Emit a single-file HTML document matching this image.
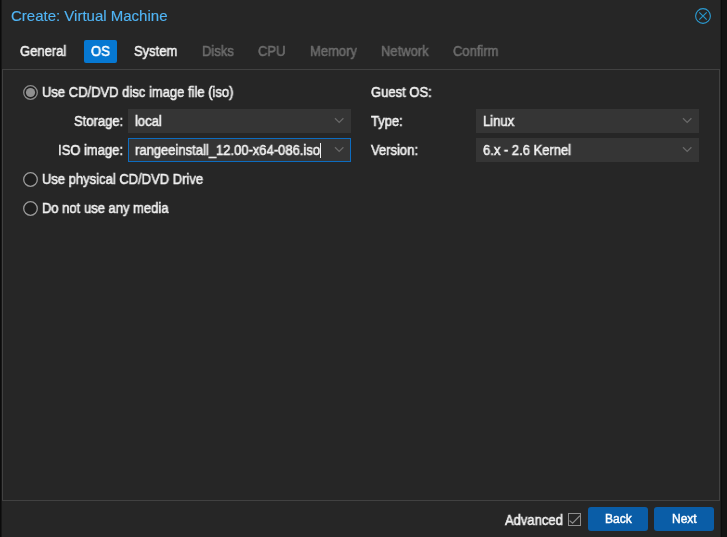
<!DOCTYPE html>
<html><head><meta charset="utf-8">
<style>
*{box-sizing:border-box;margin:0;padding:0}
html,body{width:727px;height:537px;overflow:hidden;background:#111}
body{font-family:"Liberation Sans",sans-serif;color:#f0f0f0;position:relative}
.e{position:absolute;top:0;height:537px}
.win{position:absolute;left:2px;top:0;width:718px;height:537px;background:#262626}
.t{position:absolute;white-space:nowrap;font-size:14px;line-height:16px;transform:scaleX(0.92857);transform-origin:0 0;-webkit-text-stroke:0.55px;will-change:transform}
.title{position:absolute;white-space:nowrap;left:11px;top:6px;font-size:15px;color:#50b4f4;line-height:18px;will-change:transform;transform:translateY(0.5px);-webkit-text-stroke:0.15px}
.dis{color:#6c6c6c}
.osbox{position:absolute;left:84px;top:40px;width:33px;height:23px;background:#0678d2;border-radius:2px}
.panel{position:absolute;left:2px;top:69px;width:718px;height:432px;border:1px solid #414141}
.combo{position:absolute;height:24px;background:#353535;width:223px}
.combo svg{position:absolute;left:206px;top:8px}
.btn{position:absolute;background:#0a5da7;border-radius:3px;top:507px;height:24px}
.bt{position:absolute;white-space:nowrap;font-size:12px;line-height:16px;color:#fff;-webkit-text-stroke:0.45px;will-change:transform}
</style></head><body>
<div class="e" style="left:0;width:1px;background:#0b0b0b"></div>
<div class="e" style="left:1px;width:1px;background:#171717"></div>
<div class="win"></div>
<div class="e" style="left:720px;width:1px;background:#1c1c1c"></div>
<div class="e" style="left:721px;width:1px;background:#0c0c0c"></div>
<div class="e" style="left:722px;width:5px;background:#131313"></div>

<div class="title">Create: Virtual Machine</div>
<svg style="position:absolute;left:695px;top:8px" width="16" height="16" viewBox="0 0 16 16"><circle cx="8" cy="8" r="7.4" fill="none" stroke="#2b9bd2" stroke-width="1.1"/><path d="M4.3 4.3L11.7 11.7M11.7 4.3L4.3 11.7" stroke="#2596cc" stroke-width="1.15"/></svg>

<div class="osbox"></div>
<div class="t" style="left:20px;top:43px">General</div>
<div class="t" style="left:91px;top:43px;color:#fff">OS</div>
<div class="t" style="left:134px;top:43px">System</div>
<div class="t dis" style="left:202px;top:43px">Disks</div>
<div class="t dis" style="left:258px;top:43px">CPU</div>
<div class="t dis" style="left:310px;top:43px">Memory</div>
<div class="t dis" style="left:381px;top:43px">Network</div>
<div class="t dis" style="left:453px;top:43px">Confirm</div>

<div class="panel"></div>

<!-- left column -->
<svg style="position:absolute;left:23px;top:85px" width="15" height="15" viewBox="0 0 15 15"><circle cx="7.5" cy="7.5" r="6.8" fill="#1e1e1e" stroke="#8a8a8a" stroke-width="1.3"/><circle cx="7.5" cy="7.5" r="4.6" fill="#8f8f8f"/></svg>
<div class="t" style="left:42px;top:84px">Use CD/DVD disc image file (iso)</div>

<div class="t" style="left:74px;top:113px">Storage:</div>
<div class="combo" style="left:128px;top:109px"><svg width="11" height="7" viewBox="0 0 11 7"><path d="M1 1.2L5.2 5.4L9.4 1.2" fill="none" stroke="#686868" stroke-width="1.3"/></svg></div>
<div class="t" style="left:135px;top:113px">local</div>

<div class="t" style="left:58px;top:142px">ISO image:</div>
<div class="combo" style="left:128px;top:138px;border:1px solid #0d6cc0"><svg style="left:205px;top:7px" width="11" height="7" viewBox="0 0 11 7"><path d="M1 1.2L5.2 5.4L9.4 1.2" fill="none" stroke="#686868" stroke-width="1.3"/></svg></div>
<div class="t" style="left:135px;top:142px">rangeeinstall_12.00-x64-086.iso</div>
<div style="position:absolute;left:320px;top:143px;width:1px;height:15px;background:#f0f0f0"></div>

<svg style="position:absolute;left:23px;top:172px" width="15" height="15" viewBox="0 0 15 15"><circle cx="7.5" cy="7.5" r="6.8" fill="#1e1e1e" stroke="#9a9a9a" stroke-width="1.3"/></svg>
<div class="t" style="left:42px;top:171px">Use physical CD/DVD Drive</div>
<svg style="position:absolute;left:23px;top:201px" width="15" height="15" viewBox="0 0 15 15"><circle cx="7.5" cy="7.5" r="6.8" fill="#1e1e1e" stroke="#9a9a9a" stroke-width="1.3"/></svg>
<div class="t" style="left:42px;top:200px">Do not use any media</div>

<!-- right column -->
<div class="t" style="left:371px;top:84px">Guest OS:</div>
<div class="t" style="left:371px;top:113px">Type:</div>
<div class="combo" style="left:476px;top:109px"><svg width="11" height="7" viewBox="0 0 11 7"><path d="M1 1.2L5.2 5.4L9.4 1.2" fill="none" stroke="#686868" stroke-width="1.3"/></svg></div>
<div class="t" style="left:483px;top:113px">Linux</div>
<div class="t" style="left:371px;top:142px">Version:</div>
<div class="combo" style="left:476px;top:138px"><svg width="11" height="7" viewBox="0 0 11 7"><path d="M1 1.2L5.2 5.4L9.4 1.2" fill="none" stroke="#686868" stroke-width="1.3"/></svg></div>
<div class="t" style="left:483px;top:142px">6.x - 2.6 Kernel</div>

<!-- footer -->
<div class="t" style="left:505px;top:512px">Advanced</div>
<svg style="position:absolute;left:567px;top:512px" width="15" height="15" viewBox="0 0 15 15"><rect x="1.5" y="1.5" width="12" height="12" fill="none" stroke="#8e8e8e" stroke-width="1"/><path d="M2.6 8.6L5.6 11.2L13 3.6" fill="none" stroke="#8e8e8e" stroke-width="1.2"/></svg>
<div class="btn" style="left:588px;width:60px"></div>
<div class="bt" style="left:605px;top:511px">Back</div>
<div class="btn" style="left:654px;width:60px"></div>
<div class="bt" style="left:672px;top:511px">Next</div>
</body></html>
